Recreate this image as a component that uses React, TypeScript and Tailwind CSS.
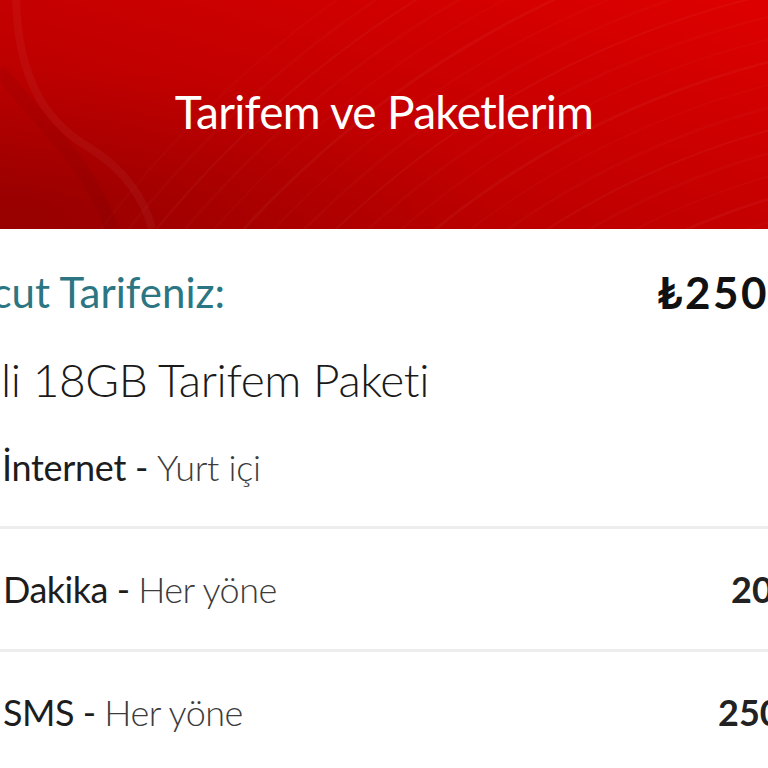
import React from "react";

const font = { fontFamily: "Lato, 'Noto Sans', sans-serif" };

function HeaderArcs() {
  const radii = [];
  for (let r = 600; r <= 1120; r += 22) radii.push(r);
  return (
    <svg
      className="absolute inset-0 h-full w-full"
      viewBox="0 0 768 229"
      preserveAspectRatio="none"
      aria-hidden="true"
    >
      <defs>
        <linearGradient id="hg" x1="0" y1="1" x2="1" y2="0">
          <stop offset="0" stopColor="#a60000" />
          <stop offset="0.45" stopColor="#c20000" />
          <stop offset="1" stopColor="#de0000" />
        </linearGradient>
        <radialGradient id="shade" cx="0.05" cy="0.9" r="0.6">
          <stop offset="0" stopColor="#000" stopOpacity="0.1" />
          <stop offset="1" stopColor="#000" stopOpacity="0" />
        </radialGradient>
      </defs>
      <rect width="768" height="229" fill="url(#hg)" />
      <rect width="768" height="229" fill="url(#shade)" />
      {radii.map((r, i) => (
        <circle
          key={r}
          cx={980}
          cy={900}
          r={r}
          fill="none"
          stroke="#ffffff"
          strokeOpacity={i % 3 === 0 ? 0.035 : 0.02}
          strokeWidth={i % 2 === 0 ? 3 : 2}
        />
      ))}
      <path
        d="M16 0 C 18 70, 40 120, 90 148 C 125 170, 145 200, 152 229"
        fill="none"
        stroke="#ffffff"
        strokeOpacity="0.04"
        strokeWidth="8"
      />
      <path
        d="M0 70 C 40 125, 85 155, 112 229"
        fill="none"
        stroke="#000000"
        strokeOpacity="0.04"
        strokeWidth="14"
      />
    </svg>
  );
}

function Row({
  label,
  detail,
  value,
  valueWidth,
}: {
  label: string;
  detail: string;
  value: string;
  valueWidth: string;
}) {
  return (
    <div className="flex h-[120px] items-center justify-between pl-[3px]">
      <div className="whitespace-nowrap text-[36px] leading-none tracking-[-0.5px] text-[#1d1d1d]">
        <span className="font-normal">{label} - </span>
        <span className="font-light text-[#3c3c3c]">{detail}</span>
      </div>
      <div
        className={`${valueWidth} whitespace-nowrap text-[36px] font-bold leading-none text-[#222]`}
      >
        {value}
      </div>
    </div>
  );
}

export default function App() {
  return (
    <div
      className="h-[768px] w-[768px] overflow-hidden bg-white"
      style={font}
    >
      <div className="relative flex h-[229px] items-center justify-center">
        <HeaderArcs />
        <h1 className="relative pb-[6px] text-[46px] font-normal leading-none tracking-[-0.7px] text-white">
          Tarifem ve Paketlerim
        </h1>
      </div>

      <div className="flex flex-col">
        <div className="mt-[41px] flex items-center justify-between">
          <div className="flex w-[225px] justify-end whitespace-nowrap text-[42px] leading-none text-[#2b7682]">
            <span>Mevcut Tarifeniz:</span>
          </div>
          <div className="w-[111px] whitespace-nowrap text-[44px] font-bold leading-none tracking-[2.5px] text-[#111]">
            ₺250,00
          </div>
        </div>

        <div className="mt-[43px] whitespace-nowrap pl-[1px] text-[46px] font-light leading-none tracking-[-0.4px] text-[#1a1a1a]">
          li 18GB Tarifem Paketi
        </div>

        <div className="mt-[46px] whitespace-nowrap pl-[2px] text-[36px] leading-none tracking-[-0.3px] text-[#1d1d1d]">
          <span>İnternet - </span>
          <span className="font-light text-[#3c3c3c]">Yurt içi</span>
        </div>

        <div className="mt-[41px] h-[3px] bg-[#ededed]" />
        <Row label="Dakika" detail="Her yöne" value="2000 DK" valueWidth="w-[37px]" />
        <div className="h-[3px] bg-[#ededed]" />
        <Row label="SMS" detail="Her yöne" value="250 SMS" valueWidth="w-[50px]" />
      </div>
    </div>
  );
}
